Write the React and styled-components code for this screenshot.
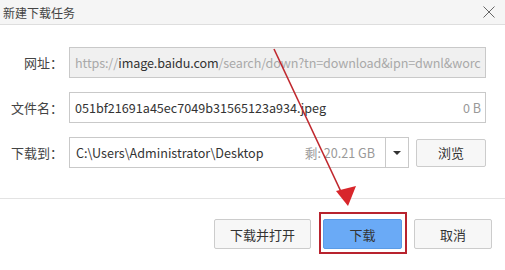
import React from "react";
import styled, { createGlobalStyle } from "styled-components";

const Global = createGlobalStyle`
  html, body { margin: 0; padding: 0; background: #fff; }
  body { font-family: "Noto Sans CJK SC", "Noto Sans", sans-serif; font-size: 13px; color: #333; }
  * { box-sizing: border-box; }
`;

const Dialog = styled.div`
  position: relative;
  width: 505px;
  height: 270px;
  background: #fff;
  overflow: hidden;
`;

const TitleBar = styled.div`
  height: 25px;
  background: #f5f5f5;
  border-bottom: 1px solid #dedede;
  display: flex;
  align-items: center;
  justify-content: space-between;
  padding: 0 10px 0 3px;
  font-size: 12px;
  color: #444;
`;

const Close = styled.svg`
  width: 12px;
  height: 12px;
`;

const Form = styled.div`
  display: flex;
  flex-direction: column;
  gap: 14px;
  padding: 22px 19px 0 8px;
  height: 174px;
  border-bottom: 1px solid #e3e3e3;
`;

const Row = styled.div`
  display: flex;
  align-items: center;
  gap: 6px;
  height: ${(p) => p.$h || 31}px;
`;

const Label = styled.div`
  width: 55px;
  text-align: right;
  color: #444;
  white-space: nowrap;
`;

const Field = styled.div`
  flex: 1;
  min-width: 0;
  height: 100%;
  display: flex;
  align-items: center;
  justify-content: space-between;
  border: 1px solid #c9c9c9;
  background: ${(p) => (p.$disabled ? "#f0f0f0" : "#fff")};
  padding: 0 4px 0 5px;
  overflow: hidden;
  white-space: nowrap;
  color: #333;
  font-size: 12.6px;
  letter-spacing: ${(p) => (p.$disabled ? "-0.12px" : "0")};
`;

const Muted = styled.span`
  color: #a9a9a9;
`;

const Combo = styled.div`
  width: 340px;
  height: 31px;
  display: flex;
  align-items: stretch;
  border: 1px solid #c9c9c9;
  font-size: 12.6px;
`;

const ComboText = styled.div`
  flex: 1;
  display: flex;
  align-items: center;
  justify-content: space-between;
  padding: 0 10px 0 6px;
  white-space: nowrap;
`;

const Free = styled.span`
  color: #999;
`;

const ComboArrow = styled.div`
  width: 23px;
  border-left: 1px solid #c9c9c9;
  display: flex;
  align-items: center;
  justify-content: center;
  &::after {
    content: "";
    border-left: 4px solid transparent;
    border-right: 4px solid transparent;
    border-top: 4px solid #333;
  }
`;

const Button = styled.button`
  font-family: inherit;
  font-size: 13px;
  color: #333;
  width: ${(p) => p.$w}px;
  height: ${(p) => p.$h || 30}px;
  border: 1px solid ${(p) => (p.$primary ? "#5a9be6" : "#cccccc")};
  background: ${(p) => (p.$primary ? "#6aaaf6" : "#f7f7f7")};
  border-radius: 2px;
  padding: 0;
  margin-left: ${(p) => p.$ml || 0}px;
`;

const Footer = styled.div`
  display: flex;
  justify-content: flex-end;
  gap: 12px;
  padding: 20px 13px 0 0;
`;

const Highlight = styled.div`
  position: relative;
  &::after {
    content: "";
    position: absolute;
    left: -4px;
    right: -5px;
    top: -7px;
    bottom: -5px;
    border: 2px solid #b8232e;
  }
`;

const Overlay = styled.svg`
  position: absolute;
  left: 0;
  top: 0;
  pointer-events: none;
`;

export default function App() {
  return (
    <>
      <Global />
      <Dialog>
        <TitleBar>
          <span>新建下载任务</span>
          <Close viewBox="0 0 12 12">
            <path d="M0.5 0.5 L11.5 11.5 M11.5 0.5 L0.5 11.5" stroke="#666" strokeWidth="1" />
          </Close>
        </TitleBar>
        <Form>
          <Row>
            <Label>网址：</Label>
            <Field $disabled>
              <span>
                <Muted>https://</Muted>image.baidu.com<Muted>/search/down?tn=download&amp;ipn=dwnl&amp;worc</Muted>
              </span>
            </Field>
          </Row>
          <Row>
            <Label>文件名：</Label>
            <Field>
              <span>051bf21691a45ec7049b31565123a934.jpeg</span>
              <Free>0 B</Free>
            </Field>
          </Row>
          <Row>
            <Label>下载到：</Label>
            <Combo>
              <ComboText>
                <span>C:\Users\Administrator\Desktop</span>
                <Free>剩: 20.21 GB</Free>
              </ComboText>
              <ComboArrow />
            </Combo>
            <Button $w={70} $h={28} $ml={1}>浏览</Button>
          </Row>
        </Form>
        <Footer>
          <Button $w={97}>下载并打开</Button>
          <Highlight>
            <Button $w={79} $primary>下载</Button>
          </Highlight>
          <Button $w={78}>取消</Button>
        </Footer>
        <Overlay width="505" height="270" viewBox="0 0 505 270">
          <line x1="274" y1="49" x2="343" y2="196" stroke="#c0272d" strokeWidth="1.6" />
          <polygon points="348,206 336,191 356,186" fill="#d8262b" />
        </Overlay>
      </Dialog>
    </>
  );
}
